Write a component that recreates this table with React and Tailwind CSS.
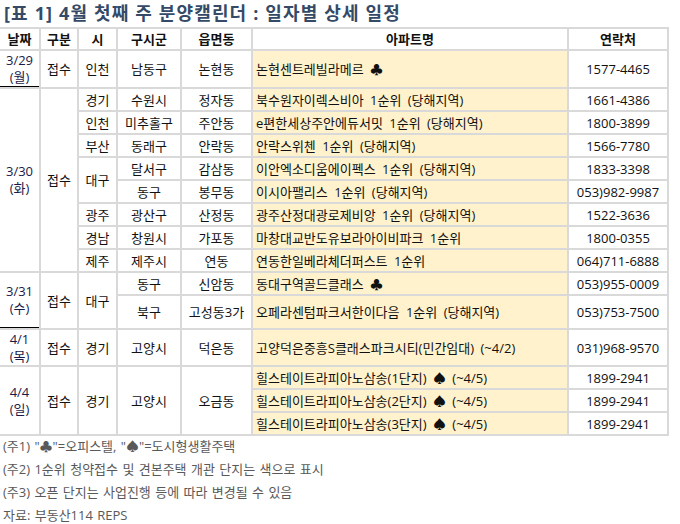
import React from 'react';

const APT = 'bg-[#fff2cc] text-left pl-[3px] whitespace-nowrap [word-spacing:3px]';
const C = 'bg-white text-center whitespace-nowrap';

const Date = ({ d, w }) => (
  <span className="block leading-[17px]">
    {d}
    <br />({w})
  </span>
);

const App = () => {
  return (
    <div className="w-[680px] h-[524px] bg-white overflow-hidden font-['Open_Sans','Noto_Sans_CJK_KR',sans-serif] text-[13px] text-[#111]">
      <div className="h-[27px] pl-[4px] leading-[26px] text-[18px] font-bold tracking-[1.15px] text-[#344a66]">
        [표 1] 4월 첫째 주 분양캘린더 : 일자별 상세 일정
      </div>

      <table className="-ml-[2px] w-[671px] table-fixed border-separate border-spacing-[2px] bg-[#d9d9d9] leading-[18px]">
        <colgroup>
          <col className="w-[39px]" />
          <col className="w-[36px]" />
          <col className="w-[37px]" />
          <col className="w-[62px]" />
          <col className="w-[69px]" />
          <col className="w-[314px]" />
          <col className="w-[98px]" />
        </colgroup>
        <thead>
          <tr className="h-[20px] font-bold">
            <th className={C}>날짜</th>
            <th className={C}>구분</th>
            <th className={C}>시</th>
            <th className={C}>구시군</th>
            <th className={C}>읍면동</th>
            <th className={C}>아파트명</th>
            <th className={C}>연락처</th>
          </tr>
        </thead>
        <tbody>
          <tr className="h-[36px]">
            <td className={`${C} border-b border-black text-[#1a1a4a]`}>
              <Date d="3/29" w="월" />
            </td>
            <td className={C}>접수</td>
            <td className={C}>인천</td>
            <td className={C}>남동구</td>
            <td className={C}>논현동</td>
            <td className={APT}>논현센트레빌라메르 ♣</td>
            <td className={C}>1577-4465</td>
          </tr>

          <tr className="h-[21px]">
            <td rowSpan={8} className={`${C} text-[#1a1a4a]`}>
              <Date d="3/30" w="화" />
            </td>
            <td rowSpan={8} className={C}>접수</td>
            <td className={C}>경기</td>
            <td className={C}>수원시</td>
            <td className={C}>정자동</td>
            <td className={APT}>북수원자이렉스비아 1순위 (당해지역)</td>
            <td className={C}>1661-4386</td>
          </tr>
          <tr className="h-[21px]">
            <td className={C}>인천</td>
            <td className={C}>미추홀구</td>
            <td className={C}>주안동</td>
            <td className={APT}>e편한세상주안에듀서밋 1순위 (당해지역)</td>
            <td className={C}>1800-3899</td>
          </tr>
          <tr className="h-[21px]">
            <td className={C}>부산</td>
            <td className={C}>동래구</td>
            <td className={C}>안락동</td>
            <td className={APT}>안락스위첸 1순위 (당해지역)</td>
            <td className={C}>1566-7780</td>
          </tr>
          <tr className="h-[21px]">
            <td rowSpan={2} className={C}>대구</td>
            <td className={C}>달서구</td>
            <td className={C}>감삼동</td>
            <td className={APT}>이안엑소디움에이펙스 1순위 (당해지역)</td>
            <td className={C}>1833-3398</td>
          </tr>
          <tr className="h-[21px]">
            <td className={C}>동구</td>
            <td className={C}>봉무동</td>
            <td className={APT}>이시아팰리스 1순위 (당해지역)</td>
            <td className={C}>053)982-9987</td>
          </tr>
          <tr className="h-[21px]">
            <td className={C}>광주</td>
            <td className={C}>광산구</td>
            <td className={C}>산정동</td>
            <td className={APT}>광주산정대광로제비앙 1순위 (당해지역)</td>
            <td className={C}>1522-3636</td>
          </tr>
          <tr className="h-[21px]">
            <td className={C}>경남</td>
            <td className={C}>창원시</td>
            <td className={C}>가포동</td>
            <td className={APT}>마창대교반도유보라아이비파크 1순위</td>
            <td className={C}>1800-0355</td>
          </tr>
          <tr className="h-[21px]">
            <td className={C}>제주</td>
            <td className={C}>제주시</td>
            <td className={C}>연동</td>
            <td className={APT}>연동한일베라체더퍼스트 1순위</td>
            <td className={C}>064)711-6888</td>
          </tr>

          <tr className="h-[21px]">
            <td rowSpan={2} className={`${C} border-b border-black text-[#1a1a4a]`}>
              <Date d="3/31" w="수" />
            </td>
            <td rowSpan={2} className={C}>접수</td>
            <td rowSpan={2} className={C}>대구</td>
            <td className={C}>동구</td>
            <td className={C}>신암동</td>
            <td className={APT}>동대구역골드클래스 ♣</td>
            <td className={C}>053)955-0009</td>
          </tr>
          <tr className="h-[32px]">
            <td className={C}>북구</td>
            <td className={C}>고성동3가</td>
            <td className={APT}>오페라센텀파크서한이다음 1순위 (당해지역)</td>
            <td className={C}>053)753-7500</td>
          </tr>

          <tr className="h-[35px]">
            <td className={`${C} text-[#1a1a4a]`}>
              <Date d="4/1" w="목" />
            </td>
            <td className={C}>접수</td>
            <td className={C}>경기</td>
            <td className={C}>고양시</td>
            <td className={C}>덕은동</td>
            <td className={APT}>고양덕은중흥S클래스파크시티(민간임대) (~4/2)</td>
            <td className={C}>031)968-9570</td>
          </tr>

          <tr className="h-[21px]">
            <td rowSpan={3} className={`${C} text-[#1a1a4a]`}>
              <Date d="4/4" w="일" />
            </td>
            <td rowSpan={3} className={C}>접수</td>
            <td rowSpan={3} className={C}>경기</td>
            <td rowSpan={3} className={C}>고양시</td>
            <td rowSpan={3} className={C}>오금동</td>
            <td className={APT}>힐스테이트라피아노삼송(1단지) ♠ (~4/5)</td>
            <td className={C}>1899-2941</td>
          </tr>
          <tr className="h-[21px]">
            <td className={APT}>힐스테이트라피아노삼송(2단지) ♠ (~4/5)</td>
            <td className={C}>1899-2941</td>
          </tr>
          <tr className="h-[21px]">
            <td className={APT}>힐스테이트라피아노삼송(3단지) ♠ (~4/5)</td>
            <td className={C}>1899-2941</td>
          </tr>
        </tbody>
      </table>

      <div className="pl-[3px] text-[13px] text-[#595959] [word-spacing:1px]">
        <p className="h-[23px] leading-[20px]">(주1) "♣"=오피스텔, "♠"=도시형생활주택</p>
        <p className="h-[23px] leading-[20px]">(주2) 1순위 청약접수 및 견본주택 개관 단지는 색으로 표시</p>
        <p className="h-[23px] leading-[20px]">(주3) 오픈 단지는 사업진행 등에 따라 변경될 수 있음</p>
        <p className="h-[23px] leading-[20px]">자료: 부동산114 REPS</p>
      </div>
    </div>
  );
};

export default App;
